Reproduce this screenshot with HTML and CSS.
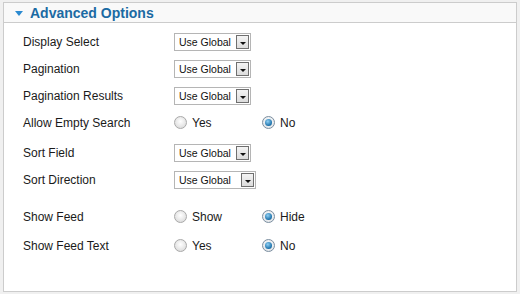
FILE: index.html
```html
<!DOCTYPE html>
<html lang="en">
<head>
    <meta charset="UTF-8">
    <title>Advanced Options</title>
    <link rel="stylesheet" href="styles.css">
</head>
<body>
    <div class="panel">
        <div class="panel-header">
            <span class="toggle"></span>
            <h3>Advanced Options</h3>
        </div>
        <div class="panel-body">
            <div class="row">
                <span class="label">Display Select</span>
                <span class="select"><span class="select-text">Use Global</span><span class="select-btn"></span></span>
            </div>
            <div class="row">
                <span class="label">Pagination</span>
                <span class="select"><span class="select-text">Use Global</span><span class="select-btn"></span></span>
            </div>
            <div class="row">
                <span class="label">Pagination Results</span>
                <span class="select"><span class="select-text">Use Global</span><span class="select-btn"></span></span>
            </div>
            <div class="row">
                <span class="label">Allow Empty Search</span>
                <span class="option"><span class="radio"></span>Yes</span>
                <span class="option"><span class="radio checked"></span>No</span>
            </div>
            <div class="row gap-top">
                <span class="label">Sort Field</span>
                <span class="select"><span class="select-text">Use Global</span><span class="select-btn"></span></span>
            </div>
            <div class="row">
                <span class="label">Sort Direction</span>
                <span class="select wide"><span class="select-text">Use Global</span><span class="select-btn"></span></span>
            </div>
            <div class="row gap-top-lg">
                <span class="label">Show Feed</span>
                <span class="option"><span class="radio"></span>Show</span>
                <span class="option"><span class="radio checked"></span>Hide</span>
            </div>
            <div class="row gap-top-sm">
                <span class="label">Show Feed Text</span>
                <span class="option"><span class="radio"></span>Yes</span>
                <span class="option"><span class="radio checked"></span>No</span>
            </div>
        </div>
    </div>
</body>
</html>
```

FILE: styles.css
```css
body {
    margin: 0;
    padding: 2px 3px 2px 3px;
    background-color: #f0f0f0;
    font-family: "Liberation Sans", Arial, sans-serif;
    height: 294px;
    box-sizing: border-box;
}
.panel {
    height: 290px;
    box-sizing: border-box;
    background: #fff;
    border: 1px solid #cccccc;
}
.panel-header {
    display: flex;
    align-items: center;
    height: 19px;
    background: #f9f9f9;
    border-bottom: 1px solid #cccccc;
    padding-left: 11px;
}
.toggle {
    width: 0;
    height: 0;
    border-left: 4px solid transparent;
    border-right: 4px solid transparent;
    border-top: 5px solid #2b8ad0;
    margin-right: 7px;
    margin-top: 1px;
}
h3 {
    margin: 0;
    font-size: 14px;
    font-weight: bold;
    color: #1b6aa3;
}
.panel-body {
    padding: 5px 0 0 19px;
}
.row {
    display: flex;
    align-items: center;
    height: 27px;
    font-size: 12px;
    color: #1a1a1a;
}
.gap-top {
    margin-top: 3px;
}
.gap-top-lg {
    margin-top: 10px;
}
.gap-top-sm {
    margin-top: 2px;
}
.label {
    width: 151px;
}
.select {
    display: flex;
    align-items: center;
    justify-content: space-between;
    width: 77px;
    height: 18px;
    box-sizing: border-box;
    border: 1px solid #b5b5b5;
    background: #fff;
    padding: 0 1px 0 4px;
}
.select.wide {
    width: 82px;
}
.select-text {
    font-size: 10.5px;
    color: #111;
}
.select-btn {
    position: relative;
    width: 13px;
    height: 14px;
    box-sizing: border-box;
    border: 1px solid #6f6f6f;
    background: linear-gradient(#f4f4f4, #dcdcdc);
}
.select-btn::after {
    content: "";
    position: absolute;
    left: 3px;
    top: 6px;
    border-left: 3px solid transparent;
    border-right: 3px solid transparent;
    border-top: 3px solid #111;
}
.option {
    display: flex;
    align-items: center;
    width: 88px;
}
.radio {
    width: 13px;
    height: 13px;
    box-sizing: border-box;
    border-radius: 50%;
    border: 1px solid #a9a9a9;
    background: radial-gradient(circle at 50% 40%, #ffffff, #d4d4d4);
    margin-right: 5px;
    display: flex;
    align-items: center;
    justify-content: center;
}
.radio.checked {
    border-color: #7b8ea0;
    background: radial-gradient(circle at 50% 40%, #ffffff, #d8dde2);
}
.radio.checked::after {
    content: "";
    width: 7px;
    height: 7px;
    border-radius: 50%;
    background: radial-gradient(circle at 40% 35%, #8fd0f5, #1a6fa8 70%, #0d4a78);
}
```
